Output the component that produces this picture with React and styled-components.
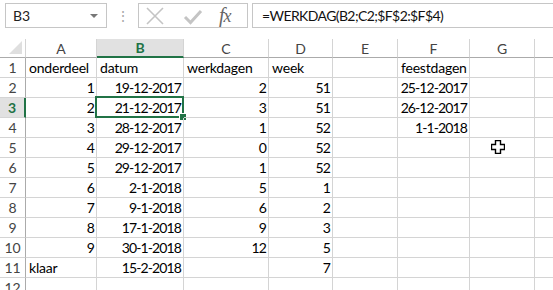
import React from "react";
import styled, { createGlobalStyle } from "styled-components";

const Global = createGlobalStyle`
  html, body { margin: 0; padding: 0; background: #fff; overflow: hidden; }
  body { font-family: "Lato", "Liberation Sans", sans-serif; }
`;

const cols = [26, 71, 87, 85, 64, 65, 72, 65, 40];
const letters = ["A", "B", "C", "D", "E", "F", "G", ""];

const rows = [
  ["onderdeel", "datum", "werkdagen", "week", "", "feestdagen", ""],
  [1, "19-12-2017", 2, 51, "", "25-12-2017", ""],
  [2, "21-12-2017", 3, 51, "", "26-12-2017", ""],
  [3, "28-12-2017", 1, 52, "", "1-1-2018", ""],
  [4, "29-12-2017", 0, 52, "", "", ""],
  [5, "29-12-2017", 1, 52, "", "", ""],
  [6, "2-1-2018", 5, 1, "", "", ""],
  [7, "9-1-2018", 6, 2, "", "", ""],
  [8, "17-1-2018", 9, 3, "", "", ""],
  [9, "30-1-2018", 12, 5, "", "", ""],
  ["klaar", "15-2-2018", "", 7, "", "", ""],
  ["", "", "", "", "", "", ""],
];

// numbers and dates sit at the right edge of their cell
const isRight = (v, r) => r > 0 && /^\d/.test(String(v));

const App = () => {
  return (
    <Page>
      <Global />
      <FormulaBar>
        <NameBox>
          <span>B3</span>
          <Caret />
        </NameBox>
        <Dots>⋮</Dots>
        <Buttons>
          <svg width="20" height="18" viewBox="0 0 20 18">
            <path d="M2 1 L18 17 M18 1 L2 17" stroke="#c4c4c4" strokeWidth="1.6" fill="none" />
          </svg>
          <svg width="20" height="18" viewBox="0 0 20 18">
            <path d="M2 10 L7.5 15.5 L18 4" stroke="#c4c4c4" strokeWidth="3" fill="none" />
          </svg>
          <Fx>
            <i>f</i><i>x</i>
          </Fx>
        </Buttons>
        <FormulaInput>=WERKDAG(B2;C2;$F$2:$F$4)</FormulaInput>
      </FormulaBar>
      <Sheet>
        <Grid>
          <Corner>
            <svg width="13" height="13" viewBox="0 0 13 13">
              <path d="M13 0 L13 13 L0 13 Z" fill="#dfdfdf" />
            </svg>
          </Corner>
          {letters.map((l, i) => (
            <ColHead key={l + i} $active={l === "B"}>{l}</ColHead>
          ))}
          {rows.map((row, r) => (
            <React.Fragment key={r}>
              <RowHead $active={r === 2}>{r + 1}</RowHead>
              {row.map((v, c) => (
                <Cell key={c} $right={isRight(v, r)}>
                  {v}
                  {r === 2 && c === 1 && (
                    <>
                      <Selection />
                      <Handle />
                    </>
                  )}
                </Cell>
              ))}
              <Cell />
            </React.Fragment>
          ))}
        </Grid>
        <Cursor>
          <svg width="14" height="14" viewBox="0 0 14 14">
            <path
              d="M4.5 0.5 H9.5 V4.5 H13.5 V9.5 H9.5 V13.5 H4.5 V9.5 H0.5 V4.5 H4.5 Z"
              fill="#fff"
              stroke="#000"
              strokeWidth="1.4"
            />
          </svg>
        </Cursor>
      </Sheet>
    </Page>
  );
};

export default App;

const Page = styled.div`
  width: 553px;
  height: 290px;
  overflow: hidden;
  background: #fff;
`;

const FormulaBar = styled.div`
  display: flex;
  align-items: center;
  height: 39px;
  padding: 3px 0 11px 5px;
  box-sizing: border-box;
`;

const NameBox = styled.div`
  width: 102px;
  height: 25px;
  box-sizing: border-box;
  border: 1px solid #c6c6c6;
  display: flex;
  align-items: center;
  justify-content: space-between;
  padding: 0 8px 0 7px;
  font-size: 14px;
  color: #222;
`;

const Caret = styled.span`
  width: 0;
  height: 0;
  border-left: 4px solid transparent;
  border-right: 4px solid transparent;
  border-top: 4px solid #777;
`;

const Dots = styled.span`
  width: 31px;
  text-align: center;
  color: #a8a8a8;
  font-size: 14px;
`;

const Buttons = styled.div`
  width: 110px;
  height: 25px;
  box-sizing: border-box;
  border: 1px solid #c6c6c6;
  display: flex;
  align-items: center;
  gap: 18px;
  padding: 0 0 0 6px;
`;

const Fx = styled.span`
  font-family: "Liberation Serif", serif;
  font-size: 18px;
  color: #666;
  letter-spacing: -1px;
  margin-left: -2px;
  i:first-child { font-size: 20px; }
`;

const FormulaInput = styled.div`
  flex: 1;
  height: 25px;
  margin-left: 4px;
  box-sizing: border-box;
  border: 1px solid #c6c6c6;
  border-right: none;
  display: flex;
  align-items: center;
  padding-left: 9px;
  font-size: 14px;
  letter-spacing: -0.6px;
  color: #111;
`;

const Sheet = styled.div`
  position: relative;
`;

const Grid = styled.div`
  display: grid;
  grid-template-columns: ${cols.map((c) => c + "px").join(" ")};
  grid-template-rows: 19px repeat(12, 20px);
  font-size: 14px;
`;

const Corner = styled.div`
  border-right: 1px solid #d4d4d4;
  border-bottom: 1px solid #ababab;
  display: flex;
  align-items: flex-end;
  justify-content: flex-end;
  padding: 0 3px 3px 0;
  box-sizing: border-box;
`;

const ColHead = styled.div`
  box-sizing: border-box;
  border-right: 1px solid #d4d4d4;
  border-bottom: ${(p) => (p.$active ? "2px solid #217346" : "1px solid #ababab")};
  background: ${(p) => (p.$active ? "#e1e1e1" : "#fff")};
  color: ${(p) => (p.$active ? "#217346" : "#444")};
  font-weight: ${(p) => (p.$active ? 700 : 400)};
  font-size: 14px;
  display: flex;
  align-items: center;
  justify-content: center;
`;

const RowHead = styled.div`
  box-sizing: border-box;
  border-right: ${(p) => (p.$active ? "2px solid #217346" : "1px solid #ababab")};
  border-bottom: 1px solid #d4d4d4;
  background: ${(p) => (p.$active ? "#e1e1e1" : "#fff")};
  color: ${(p) => (p.$active ? "#217346" : "#444")};
  font-weight: ${(p) => (p.$active ? 700 : 400)};
  font-size: 14px;
  display: flex;
  align-items: center;
  justify-content: center;
`;

const Cell = styled.div`
  position: relative;
  box-sizing: border-box;
  border-right: 1px solid #d4d4d4;
  border-bottom: 1px solid #d4d4d4;
  display: flex;
  align-items: center;
  justify-content: ${(p) => (p.$right ? "flex-end" : "flex-start")};
  padding: 0 ${(p) => (p.$right ? "2px" : "3px")};
  letter-spacing: ${(p) => (p.$right ? "-0.9px" : "-0.2px")};
  white-space: nowrap;
  color: #000;
`;

const Selection = styled.div`
  position: absolute;
  left: -2px;
  top: -2px;
  right: -1px;
  bottom: -1px;
  border: 2px solid #217346;
  pointer-events: none;
`;

const Handle = styled.div`
  position: absolute;
  right: -4px;
  bottom: -4px;
  width: 6px;
  height: 6px;
  background: #217346;
  border: 1px solid #fff;
`;

const Cursor = styled.div`
  position: absolute;
  left: 491px;
  top: 101px;
  line-height: 0;
`;
